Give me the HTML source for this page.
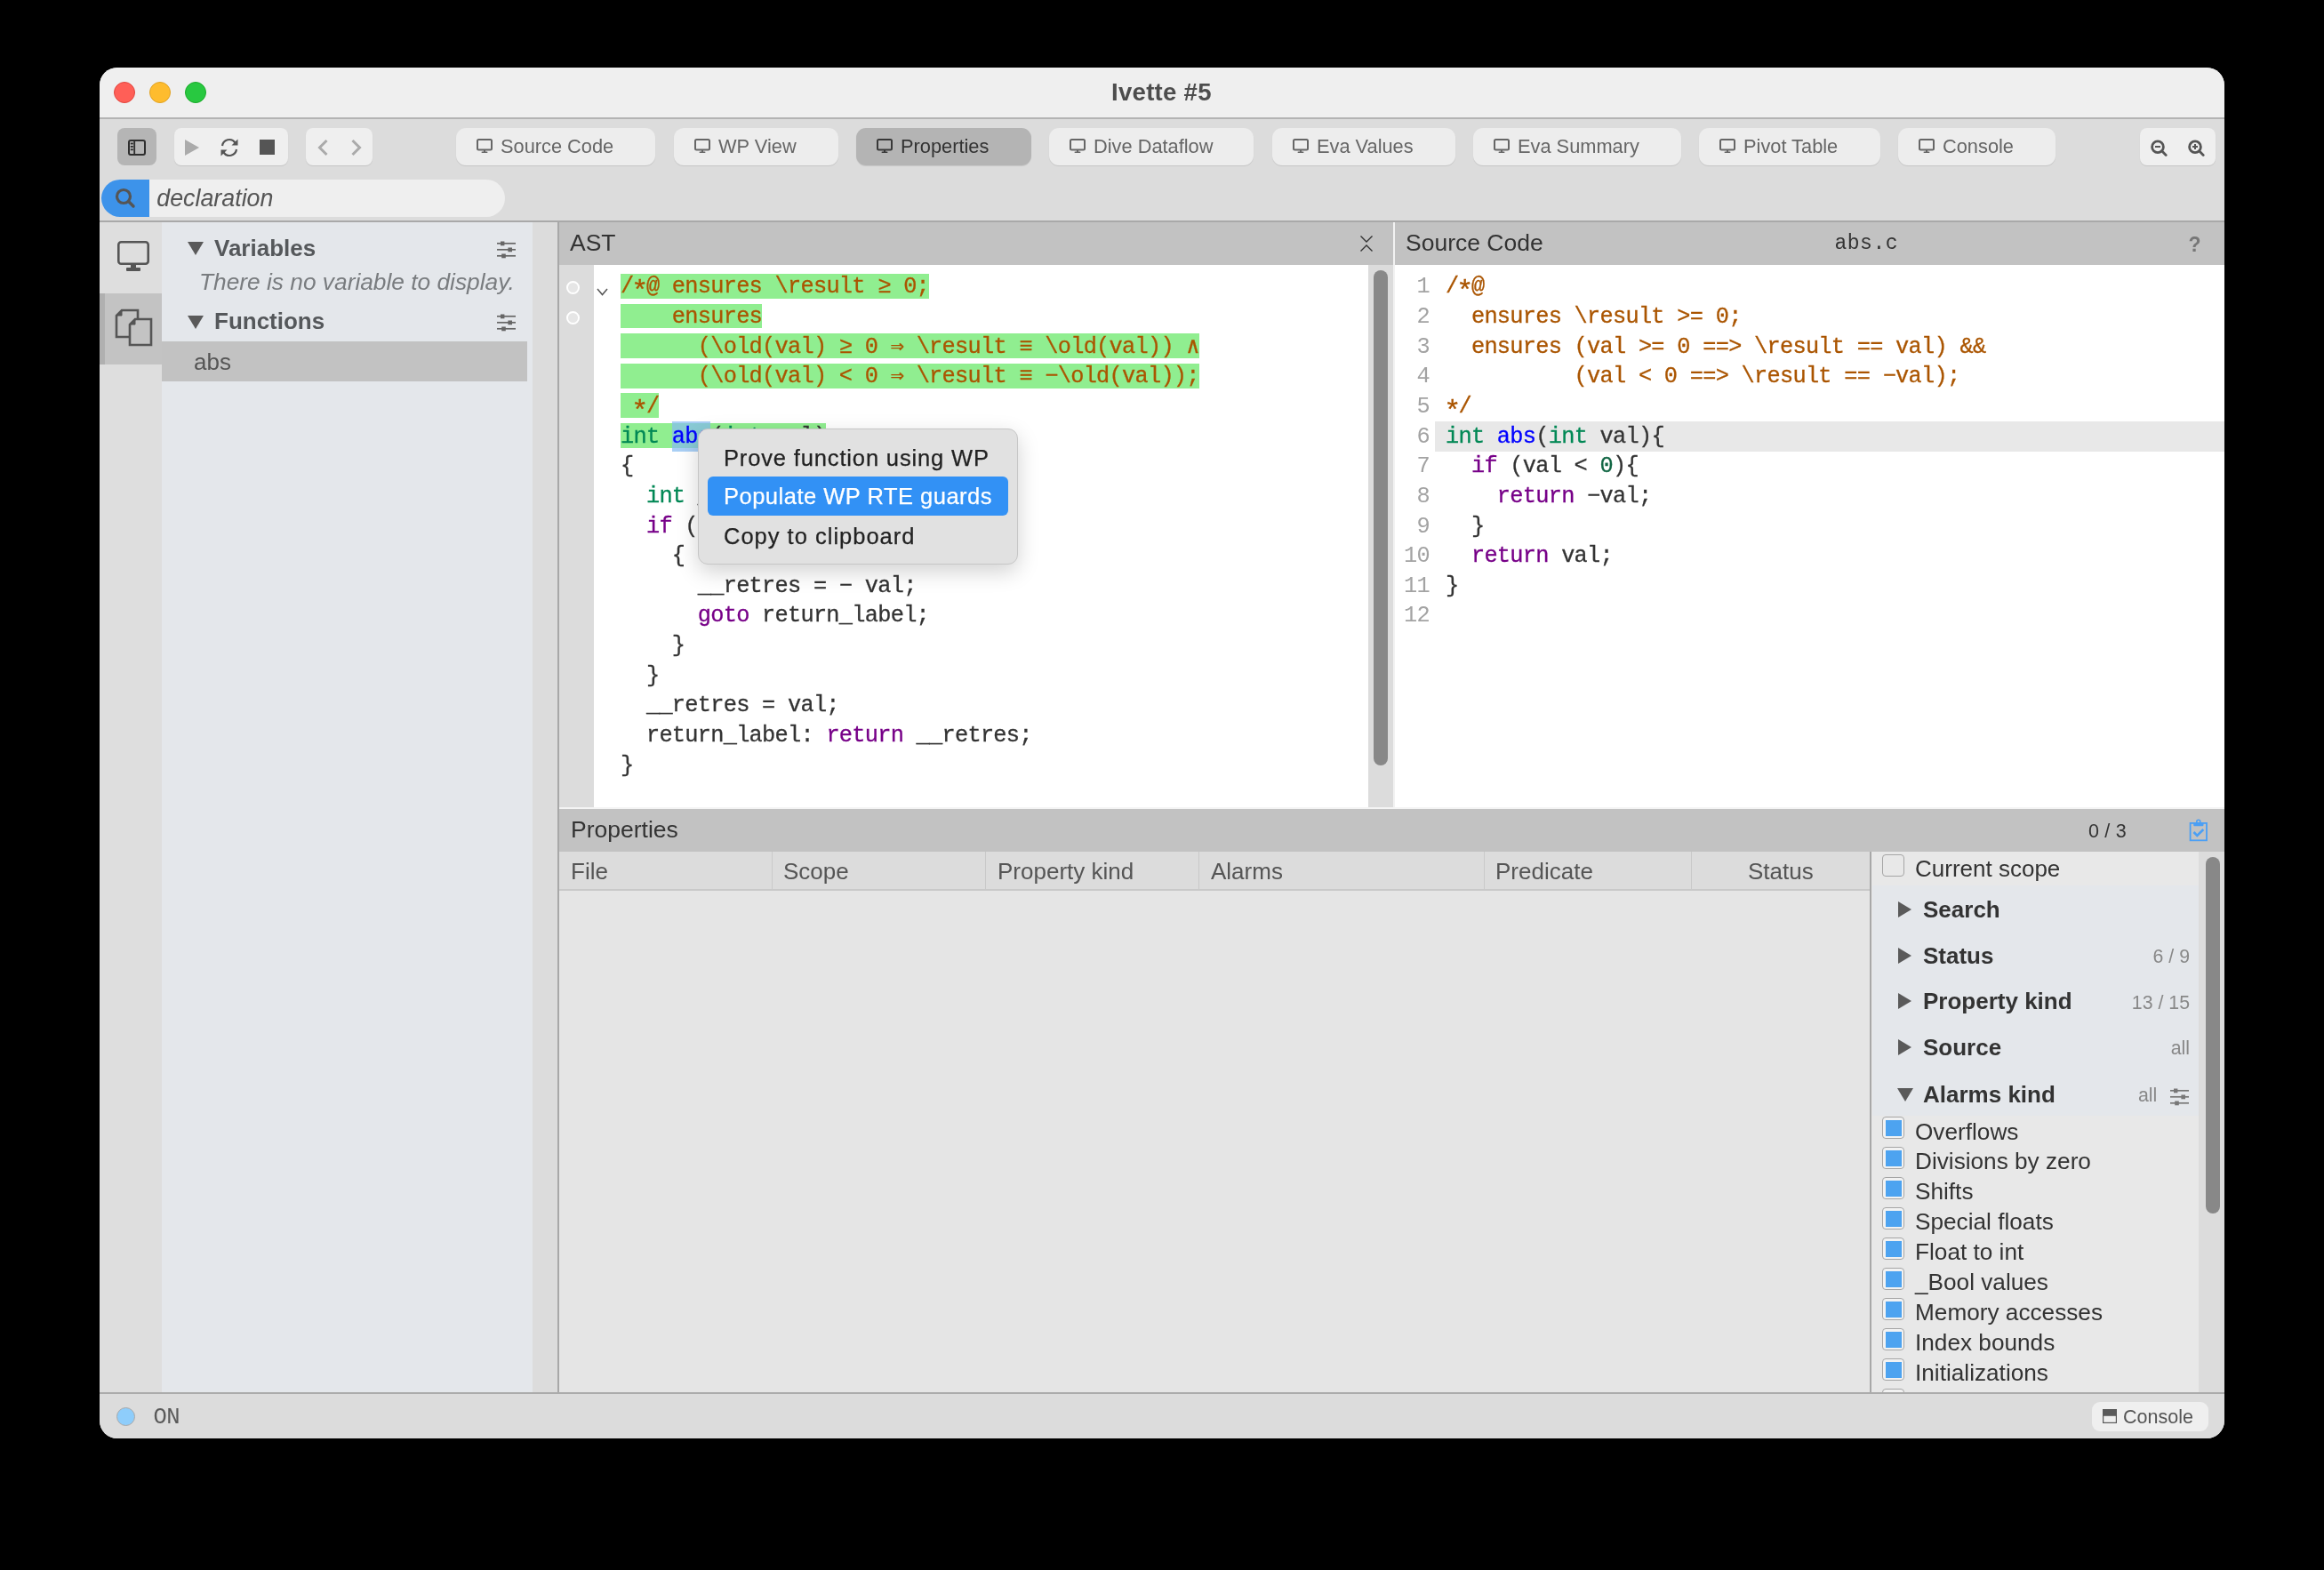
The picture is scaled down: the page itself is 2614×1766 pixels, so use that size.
<!DOCTYPE html>
<html><head><meta charset="utf-8"><title>Ivette</title>
<style>
html,body{margin:0;padding:0;width:2614px;height:1766px;background:#000;overflow:hidden}
.a{position:absolute;box-sizing:border-box}
.t{white-space:pre}
#win{position:absolute;left:112px;top:76px;width:2390px;height:1542px;border-radius:20px;overflow:hidden;background:#dcdcdc}
#inner{position:absolute;left:-112px;top:-76px;width:2614px;height:1766px;will-change:transform}
</style></head><body>
<div id="win"><div id="inner">

<div class="a" style="left:112px;top:76px;width:2390px;height:56px;background:#efefef;"></div>
<div class="a" style="left:112px;top:132px;width:2390px;height:1.5px;background:#b3b3b3;"></div>
<div class="a" style="left:128px;top:92px;width:24px;height:24px;border-radius:50%;background:#ff5f57;border:1px solid #e2463f"></div>
<div class="a" style="left:168px;top:92px;width:24px;height:24px;border-radius:50%;background:#febc2e;border:1px solid #e1a325"></div>
<div class="a" style="left:208px;top:92px;width:24px;height:24px;border-radius:50%;background:#28c840;border:1px solid #1aab29"></div>
<div class="a t" style="left:1250px;top:86.97px;font-family:'Liberation Sans', sans-serif;font-size:27.5px;line-height:33.0px;color:#4d4d4d;font-weight:bold;font-style:normal;letter-spacing:0.3px;">Ivette #5</div>
<div class="a" style="left:112px;top:134px;width:2390px;height:114px;background:#dcdcdc;"></div>
<div class="a" style="left:112px;top:248px;width:2390px;height:2px;background:#a9a9a9;"></div>
<div class="a" style="left:132px;top:144px;width:44px;height:42px;border-radius:8px;background:#b5b5b5"></div>
<svg class="a" style="left:144px;top:157px;" width="20" height="18" viewBox="0 0 20 18"><rect x="1" y="1" width="18" height="16" rx="2" fill="none" stroke="#2e2e2e" stroke-width="2"/><line x1="7.2" y1="1" x2="7.2" y2="17" stroke="#2e2e2e" stroke-width="1.8"/><rect x="2.8" y="3.6" width="3" height="1.8" fill="#2e2e2e"/><rect x="2.8" y="7" width="3" height="1.8" fill="#2e2e2e"/><rect x="2.8" y="10.4" width="3" height="1.8" fill="#2e2e2e"/></svg>
<div class="a" style="left:196px;top:144px;width:128px;height:42px;border-radius:8px;background:#efefef;box-shadow:0 1px 1px rgba(0,0,0,0.10)"></div>
<svg class="a" style="left:207px;top:157px;" width="17" height="18" viewBox="0 0 17 18"><path d="M1 0 L17 9 L1 18 Z" fill="#ababab"/></svg>
<svg class="a" style="left:246px;top:155px;" width="24" height="22" viewBox="0 0 24 22"><path d="M4 9 A8 8 0 0 1 18.5 5.5" fill="none" stroke="#555" stroke-width="2.2"/><path d="M20 13 A8 8 0 0 1 5.5 16.5" fill="none" stroke="#555" stroke-width="2.2"/><path d="M21.5 1.5 L21.5 8.5 L14.5 8.5 Z" fill="#555"/><path d="M2.5 20.5 L2.5 13.5 L9.5 13.5 Z" fill="#555"/></svg>
<div class="a" style="left:292px;top:157px;width:17px;height:17px;background:#555;"></div>
<div class="a" style="left:344px;top:144px;width:75px;height:42px;border-radius:8px;background:#efefef;box-shadow:0 1px 1px rgba(0,0,0,0.10)"></div>
<svg class="a" style="left:356px;top:156px;" width="14" height="20" viewBox="0 0 14 20"><path d="M11.5 2 L3.5 10 L11.5 18" fill="none" stroke="#aaa" stroke-width="3"/></svg>
<svg class="a" style="left:394px;top:156px;" width="14" height="20" viewBox="0 0 14 20"><path d="M2.5 2 L10.5 10 L2.5 18" fill="none" stroke="#aaa" stroke-width="3"/></svg>
<div class="a" style="left:513px;top:144px;width:224px;height:42px;border-radius:11px;background:#ededed;box-shadow:0 1px 1px rgba(0,0,0,0.10)"></div>
<svg class="a" style="left:536px;top:156px;" width="18" height="17" viewBox="0 0 18 17"><rect x="1" y="1" width="16" height="11.5" rx="1.5" fill="none" stroke="#666" stroke-width="2"/><rect x="8" y="12.5" width="2" height="2.5" fill="#666"/><rect x="5.5" y="14.5" width="7" height="1.6" rx="0.8" fill="#666"/></svg>
<div class="a t" style="left:563px;top:151.97px;font-family:'Liberation Sans', sans-serif;font-size:21.8px;line-height:26.16px;color:#666;font-weight:normal;font-style:normal;">Source Code</div>
<div class="a" style="left:758px;top:144px;width:185px;height:42px;border-radius:11px;background:#ededed;box-shadow:0 1px 1px rgba(0,0,0,0.10)"></div>
<svg class="a" style="left:781px;top:156px;" width="18" height="17" viewBox="0 0 18 17"><rect x="1" y="1" width="16" height="11.5" rx="1.5" fill="none" stroke="#666" stroke-width="2"/><rect x="8" y="12.5" width="2" height="2.5" fill="#666"/><rect x="5.5" y="14.5" width="7" height="1.6" rx="0.8" fill="#666"/></svg>
<div class="a t" style="left:808px;top:151.97px;font-family:'Liberation Sans', sans-serif;font-size:21.8px;line-height:26.16px;color:#666;font-weight:normal;font-style:normal;">WP View</div>
<div class="a" style="left:963px;top:144px;width:197px;height:42px;border-radius:11px;background:#b4b4b4;box-shadow:0 1px 1px rgba(0,0,0,0.10)"></div>
<svg class="a" style="left:986px;top:156px;" width="18" height="17" viewBox="0 0 18 17"><rect x="1" y="1" width="16" height="11.5" rx="1.5" fill="none" stroke="#383838" stroke-width="2"/><rect x="8" y="12.5" width="2" height="2.5" fill="#383838"/><rect x="5.5" y="14.5" width="7" height="1.6" rx="0.8" fill="#383838"/></svg>
<div class="a t" style="left:1013px;top:151.97px;font-family:'Liberation Sans', sans-serif;font-size:21.8px;line-height:26.16px;color:#333;font-weight:normal;font-style:normal;">Properties</div>
<div class="a" style="left:1180px;top:144px;width:230px;height:42px;border-radius:11px;background:#ededed;box-shadow:0 1px 1px rgba(0,0,0,0.10)"></div>
<svg class="a" style="left:1203px;top:156px;" width="18" height="17" viewBox="0 0 18 17"><rect x="1" y="1" width="16" height="11.5" rx="1.5" fill="none" stroke="#666" stroke-width="2"/><rect x="8" y="12.5" width="2" height="2.5" fill="#666"/><rect x="5.5" y="14.5" width="7" height="1.6" rx="0.8" fill="#666"/></svg>
<div class="a t" style="left:1230px;top:151.97px;font-family:'Liberation Sans', sans-serif;font-size:21.8px;line-height:26.16px;color:#666;font-weight:normal;font-style:normal;">Dive Dataflow</div>
<div class="a" style="left:1431px;top:144px;width:206px;height:42px;border-radius:11px;background:#ededed;box-shadow:0 1px 1px rgba(0,0,0,0.10)"></div>
<svg class="a" style="left:1454px;top:156px;" width="18" height="17" viewBox="0 0 18 17"><rect x="1" y="1" width="16" height="11.5" rx="1.5" fill="none" stroke="#666" stroke-width="2"/><rect x="8" y="12.5" width="2" height="2.5" fill="#666"/><rect x="5.5" y="14.5" width="7" height="1.6" rx="0.8" fill="#666"/></svg>
<div class="a t" style="left:1481px;top:151.97px;font-family:'Liberation Sans', sans-serif;font-size:21.8px;line-height:26.16px;color:#666;font-weight:normal;font-style:normal;">Eva Values</div>
<div class="a" style="left:1657px;top:144px;width:234px;height:42px;border-radius:11px;background:#ededed;box-shadow:0 1px 1px rgba(0,0,0,0.10)"></div>
<svg class="a" style="left:1680px;top:156px;" width="18" height="17" viewBox="0 0 18 17"><rect x="1" y="1" width="16" height="11.5" rx="1.5" fill="none" stroke="#666" stroke-width="2"/><rect x="8" y="12.5" width="2" height="2.5" fill="#666"/><rect x="5.5" y="14.5" width="7" height="1.6" rx="0.8" fill="#666"/></svg>
<div class="a t" style="left:1707px;top:151.97px;font-family:'Liberation Sans', sans-serif;font-size:21.8px;line-height:26.16px;color:#666;font-weight:normal;font-style:normal;">Eva Summary</div>
<div class="a" style="left:1911px;top:144px;width:204px;height:42px;border-radius:11px;background:#ededed;box-shadow:0 1px 1px rgba(0,0,0,0.10)"></div>
<svg class="a" style="left:1934px;top:156px;" width="18" height="17" viewBox="0 0 18 17"><rect x="1" y="1" width="16" height="11.5" rx="1.5" fill="none" stroke="#666" stroke-width="2"/><rect x="8" y="12.5" width="2" height="2.5" fill="#666"/><rect x="5.5" y="14.5" width="7" height="1.6" rx="0.8" fill="#666"/></svg>
<div class="a t" style="left:1961px;top:151.97px;font-family:'Liberation Sans', sans-serif;font-size:21.8px;line-height:26.16px;color:#666;font-weight:normal;font-style:normal;">Pivot Table</div>
<div class="a" style="left:2135px;top:144px;width:177px;height:42px;border-radius:11px;background:#ededed;box-shadow:0 1px 1px rgba(0,0,0,0.10)"></div>
<svg class="a" style="left:2158px;top:156px;" width="18" height="17" viewBox="0 0 18 17"><rect x="1" y="1" width="16" height="11.5" rx="1.5" fill="none" stroke="#666" stroke-width="2"/><rect x="8" y="12.5" width="2" height="2.5" fill="#666"/><rect x="5.5" y="14.5" width="7" height="1.6" rx="0.8" fill="#666"/></svg>
<div class="a t" style="left:2185px;top:151.97px;font-family:'Liberation Sans', sans-serif;font-size:21.8px;line-height:26.16px;color:#666;font-weight:normal;font-style:normal;">Console</div>
<div class="a" style="left:2407px;top:144px;width:85px;height:42px;border-radius:8px;background:#efefef;box-shadow:0 1px 1px rgba(0,0,0,0.10)"></div>
<svg class="a" style="left:2419px;top:157px;" width="19" height="19" viewBox="0 0 19 19"><circle cx="8" cy="8.2" r="6.4" fill="none" stroke="#555" stroke-width="2.8"/><line x1="12.6" y1="12.8" x2="17.2" y2="17.4" stroke="#555" stroke-width="2.8" stroke-linecap="round"/><line x1="5" y1="8" x2="11" y2="8" stroke="#555" stroke-width="2"/></svg>
<svg class="a" style="left:2461px;top:157px;" width="19" height="19" viewBox="0 0 19 19"><circle cx="8" cy="8.2" r="6.4" fill="none" stroke="#555" stroke-width="2.8"/><line x1="12.6" y1="12.8" x2="17.2" y2="17.4" stroke="#555" stroke-width="2.8" stroke-linecap="round"/><line x1="5" y1="8" x2="11" y2="8" stroke="#555" stroke-width="2"/><line x1="8" y1="5" x2="8" y2="11" stroke="#555" stroke-width="2"/></svg>
<div class="a" style="left:114px;top:202px;width:454px;height:42px;border-radius:21px;background:#efefef"></div>
<div class="a" style="left:114px;top:202px;width:54px;height:42px;border-radius:21px 0 0 21px;background:#3d93ea"></div>
<svg class="a" style="left:128px;top:210px;" width="26" height="26" viewBox="0 0 26 26"><circle cx="11" cy="11" r="7.5" fill="none" stroke="#555" stroke-width="3.2"/><line x1="16.5" y1="16.5" x2="22" y2="22" stroke="#555" stroke-width="3.4" stroke-linecap="round"/></svg>
<div class="a t" style="left:176.3px;top:207.33px;font-family:'Liberation Sans', sans-serif;font-size:26.8px;line-height:32.16px;color:#555;font-weight:normal;font-style:italic;">declaration</div>
<div class="a" style="left:112px;top:250px;width:70px;height:1317px;background:#dedede;"></div>
<div class="a" style="left:112px;top:330px;width:70px;height:80px;background:#c3c3c3;"></div>
<div class="a" style="left:112px;top:330px;width:6px;height:80px;background:#b0b0b0;"></div>
<svg class="a" style="left:131px;top:270px;" width="38" height="36" viewBox="0 0 38 36"><rect x="2.3" y="2.3" width="33.4" height="24.4" rx="3" fill="none" stroke="#555" stroke-width="2.6"/><rect x="16" y="27" width="6" height="5" fill="#555"/><rect x="11" y="31" width="16" height="4" rx="1" fill="#555"/></svg>
<svg class="a" style="left:128px;top:346px;" width="44" height="44" viewBox="0 0 44 44"><path d="M9 3 H27 V33 H3 V9 Z" fill="#c3c3c3" stroke="#555" stroke-width="2.6"/><path d="M3 9 L9 9 L9 3" fill="#555" stroke="#555" stroke-width="1"/><path d="M24 13 H42 V42 H18 V19 Z" fill="#c3c3c3" stroke="#555" stroke-width="2.6"/><path d="M18 19 L24 19 L24 13" fill="#555" stroke="#555" stroke-width="1"/></svg>
<div class="a" style="left:182px;top:250px;width:417px;height:1317px;background:#e4e7eb;"></div>
<div class="a" style="left:599px;top:250px;width:28px;height:1317px;background:#dcdcdc;"></div>
<div class="a" style="left:627px;top:250px;width:2px;height:1317px;background:#a8a8a8;"></div>
<svg class="a" style="left:211px;top:272px;" width="18" height="15" viewBox="0 0 18 15"><path d="M0 0 H18 L9 15 Z" fill="#5a5a5a"/></svg>
<div class="a t" style="left:241px;top:264.39px;font-family:'Liberation Sans', sans-serif;font-size:26px;line-height:31.2px;color:#55585b;font-weight:bold;font-style:normal;">Variables</div>
<svg class="a" style="left:559px;top:271px;" width="21" height="20" viewBox="0 0 21 20"><line x1="0" y1="2.8" x2="21" y2="2.8" stroke="#666" stroke-width="1.7"/><line x1="0" y1="9.8" x2="21" y2="9.8" stroke="#666" stroke-width="1.7"/><line x1="0" y1="16.8" x2="21" y2="16.8" stroke="#666" stroke-width="1.7"/><rect x="4" y="0.5" width="4.4" height="4.8" fill="#666"/><rect x="12.4" y="7.5" width="4.6" height="4.8" fill="#666"/><rect x="5.2" y="14.5" width="4.6" height="4.8" fill="#666"/></svg>
<div class="a t" style="left:224px;top:302.11px;font-family:'Liberation Sans', sans-serif;font-size:26.3px;line-height:31.56px;color:#797c7f;font-weight:normal;font-style:italic;">There is no variable to display.</div>
<svg class="a" style="left:211px;top:355px;" width="18" height="15" viewBox="0 0 18 15"><path d="M0 0 H18 L9 15 Z" fill="#5a5a5a"/></svg>
<div class="a t" style="left:241px;top:346.39px;font-family:'Liberation Sans', sans-serif;font-size:26px;line-height:31.2px;color:#55585b;font-weight:bold;font-style:normal;">Functions</div>
<svg class="a" style="left:559px;top:353px;" width="21" height="20" viewBox="0 0 21 20"><line x1="0" y1="2.8" x2="21" y2="2.8" stroke="#666" stroke-width="1.7"/><line x1="0" y1="9.8" x2="21" y2="9.8" stroke="#666" stroke-width="1.7"/><line x1="0" y1="16.8" x2="21" y2="16.8" stroke="#666" stroke-width="1.7"/><rect x="4" y="0.5" width="4.4" height="4.8" fill="#666"/><rect x="12.4" y="7.5" width="4.6" height="4.8" fill="#666"/><rect x="5.2" y="14.5" width="4.6" height="4.8" fill="#666"/></svg>
<div class="a" style="left:182px;top:384px;width:411px;height:45px;background:#c2c2c2;"></div>
<div class="a t" style="left:218px;top:391.99px;font-family:'Liberation Sans', sans-serif;font-size:26px;line-height:31.2px;color:#555;font-weight:normal;font-style:normal;">abs</div>
<div class="a" style="left:629px;top:250px;width:938px;height:48px;background:#c2c2c2;"></div>
<div class="a t" style="left:641px;top:257.92px;font-family:'Liberation Sans', sans-serif;font-size:26.5px;line-height:31.8px;color:#333;font-weight:normal;font-style:normal;">AST</div>
<svg class="a" style="left:1529px;top:264px;" width="16" height="20" viewBox="0 0 16 20"><path d="M1.5 1.5 L8 8 L14.5 1.5" fill="none" stroke="#333" stroke-width="1.4"/><path d="M1.5 18.5 L8 12 L14.5 18.5" fill="none" stroke="#333" stroke-width="1.4"/></svg>
<div class="a" style="left:629px;top:298px;width:39px;height:610px;background:#dcdcdc;"></div>
<div class="a" style="left:668px;top:298px;width:871px;height:610px;background:#ffffff;"></div>
<div class="a" style="left:1539px;top:298px;width:28px;height:610px;background:#dcdcdc;"></div>
<div class="a" style="left:1545px;top:304px;width:16px;height:557px;border-radius:8px;background:#888"></div>
<div class="a" style="left:629px;top:908px;width:1873px;height:2px;background:#f4f4f4;"></div>
<div class="a" style="left:1567px;top:250px;width:2px;height:658px;background:#f2f2f2;"></div>
<div class="a" style="left:636.5px;top:316.1px;width:15px;height:15px;border-radius:50%;border:2px solid #fff;background:#e6e6e6"></div>
<div class="a" style="left:636.5px;top:350.1px;width:15px;height:15px;border-radius:50%;border:2px solid #fff;background:#e6e6e6"></div>
<svg class="a" style="left:671px;top:324px;" width="13" height="9" viewBox="0 0 13 9"><path d="M1 1 L6.5 7.5 L12 1" fill="none" stroke="#555" stroke-width="1.5"/></svg>
<div class="a" style="left:698px;top:307.90px;width:347.04px;height:27.8px;background:#90ee90"></div>
<div class="a" style="left:698px;top:341.54px;width:159.06px;height:27.8px;background:#90ee90"></div>
<div class="a" style="left:698px;top:375.17px;width:650.70px;height:27.8px;background:#90ee90"></div>
<div class="a" style="left:698px;top:408.81px;width:650.70px;height:27.8px;background:#90ee90"></div>
<div class="a" style="left:698px;top:442.44px;width:43.38px;height:27.8px;background:#90ee90"></div>
<div class="a" style="left:698px;top:476.08px;width:231.36px;height:27.8px;background:#90ee90"></div>
<div class="a" style="left:755.84px;top:473.7px;width:43.38px;height:34px;background:rgba(134,187,241,0.71)"></div>
<div class="a t" style="left:698px;top:306.4px;font-family:'Liberation Mono', monospace;font-size:25.3px;letter-spacing:-0.72px;line-height:33.636px;color:#333;-webkit-text-stroke:0.3px;"><span style="color:#a50;">/<span style="display:inline-block;transform:translateY(6px) scale(1.25)">*</span>@ ensures \result ≥ 0;</span>
<span style="color:#a50;">    ensures</span>
<span style="color:#a50;">      (\old(val) ≥ 0 ⇒ \result ≡ \old(val)) ∧</span>
<span style="color:#a50;">      (\old(val) &lt; 0 ⇒ \result ≡ −\old(val));</span>
<span style="color:#a50;"> <span style="display:inline-block;transform:translateY(6px) scale(1.25)">*</span>/</span>
<span style="color:#085;">int</span> <span style="color:#00f;">abs</span>(<span style="color:#085;">int</span> val)
{
  <span style="color:#085;">int</span> __retres;
  <span style="color:#708;">if</span> (val &lt; <span style="color:#164;">0</span>) {
    {
      __retres = − val;
      <span style="color:#708;">goto</span> return_label;
    }
  }
  __retres = val;
  return_label: <span style="color:#708;">return</span> __retres;
}</div>
<div class="a" style="left:1569px;top:250px;width:933px;height:48px;background:#c2c2c2;"></div>
<div class="a t" style="left:1581px;top:257.92px;font-family:'Liberation Sans', sans-serif;font-size:26.5px;line-height:31.8px;color:#333;font-weight:normal;font-style:normal;">Source Code</div>
<div class="a t" style="left:2063.5px;top:261.07px;font-family:'Liberation Mono', monospace;font-size:23px;line-height:27.6px;color:#333;font-weight:normal;font-style:normal;letter-spacing:0.5px;">abs.c</div>
<div class="a t" style="left:2461.5px;top:261.83px;font-family:'Liberation Sans', sans-serif;font-size:23px;line-height:27.6px;color:#777;font-weight:bold;font-style:normal;">?</div>
<div class="a" style="left:1569px;top:298px;width:933px;height:610px;background:#ffffff;"></div>
<div class="a" style="left:1614px;top:474px;width:888px;height:34px;background:#e8e8e8;"></div>
<div class="a t" style="left:1626px;top:306.4px;font-family:'Liberation Mono', monospace;font-size:25.3px;letter-spacing:-0.72px;line-height:33.636px;color:#333;-webkit-text-stroke:0.3px;"><span style="color:#a50;">/<span style="display:inline-block;transform:translateY(6px) scale(1.25)">*</span>@</span>
<span style="color:#a50;">  ensures \result &gt;= 0;</span>
<span style="color:#a50;">  ensures (val &gt;= 0 ==&gt; \result == val) &amp;&amp;</span>
<span style="color:#a50;">          (val &lt; 0 ==&gt; \result == −val);</span>
<span style="color:#a50;"><span style="display:inline-block;transform:translateY(6px) scale(1.25)">*</span>/</span>
<span style="color:#085;">int</span> <span style="color:#00f;">abs</span>(<span style="color:#085;">int</span> val){
  <span style="color:#708;">if</span> (val &lt; <span style="color:#164;">0</span>){
    <span style="color:#708;">return</span> −val;
  }
  <span style="color:#708;">return</span> val;
}
</div>
<div class="a t" style="left:1560px;width:48px;text-align:right;top:306.4px;font-family:'Liberation Mono', monospace;font-size:25.3px;letter-spacing:-0.72px;line-height:33.636px;color:#a3a3a3">1
2
3
4
5
6
7
8
9
10
11
12</div>
<div class="a" style="left:629px;top:910px;width:1873px;height:48px;background:#c2c2c2;"></div>
<div class="a t" style="left:642px;top:917.92px;font-family:'Liberation Sans', sans-serif;font-size:26.5px;line-height:31.8px;color:#333;font-weight:normal;font-style:normal;">Properties</div>
<div class="a t" style="left:2349px;top:922.65px;font-family:'Liberation Sans', sans-serif;font-size:21.5px;line-height:25.8px;color:#333;font-weight:normal;font-style:normal;letter-spacing:0.2px;">0 / 3</div>
<svg class="a" style="left:2461px;top:921px;" width="24" height="26" viewBox="0 0 24 26"><rect x="2.6" y="4.9" width="18.4" height="19.4" fill="none" stroke="#4a9ff5" stroke-width="1.8"/><path d="M6.2 5 H17.5 V7 Q17.5 8.2 16.3 8.2 H7.4 Q6.2 8.2 6.2 7 Z" fill="#4a9ff5"/><circle cx="11.8" cy="3.3" r="2" fill="none" stroke="#4a9ff5" stroke-width="1.6"/><path d="M6.5 15 L10.3 19 L17.3 12" fill="none" stroke="#4a9ff5" stroke-width="2.6"/></svg>
<div class="a" style="left:629px;top:958px;width:1474px;height:42px;background:#dcdcdc;"></div>
<div class="a" style="left:629px;top:1000px;width:1474px;height:2px;background:#c9c9c9;"></div>
<div class="a" style="left:629px;top:1002px;width:1474px;height:565px;background:#e5e5e5;"></div>
<div class="a" style="left:868px;top:958px;width:1px;height:42px;background:#c9c9c9;"></div>
<div class="a" style="left:1108px;top:958px;width:1px;height:42px;background:#c9c9c9;"></div>
<div class="a" style="left:1348px;top:958px;width:1px;height:42px;background:#c9c9c9;"></div>
<div class="a" style="left:1669px;top:958px;width:1px;height:42px;background:#c9c9c9;"></div>
<div class="a" style="left:1902px;top:958px;width:1px;height:42px;background:#c9c9c9;"></div>
<div class="a t" style="left:642px;top:965.39px;font-family:'Liberation Sans', sans-serif;font-size:26px;line-height:31.2px;color:#555;font-weight:normal;font-style:normal;">File</div>
<div class="a t" style="left:881px;top:965.39px;font-family:'Liberation Sans', sans-serif;font-size:26px;line-height:31.2px;color:#555;font-weight:normal;font-style:normal;">Scope</div>
<div class="a t" style="left:1122px;top:965.39px;font-family:'Liberation Sans', sans-serif;font-size:26px;line-height:31.2px;color:#555;font-weight:normal;font-style:normal;">Property kind</div>
<div class="a t" style="left:1362px;top:965.39px;font-family:'Liberation Sans', sans-serif;font-size:26px;line-height:31.2px;color:#555;font-weight:normal;font-style:normal;">Alarms</div>
<div class="a t" style="left:1682px;top:965.39px;font-family:'Liberation Sans', sans-serif;font-size:26px;line-height:31.2px;color:#555;font-weight:normal;font-style:normal;">Predicate</div>
<div class="a t" style="left:1966px;top:965.39px;font-family:'Liberation Sans', sans-serif;font-size:26px;line-height:31.2px;color:#555;font-weight:normal;font-style:normal;">Status</div>
<div class="a" style="left:2103px;top:958px;width:2px;height:609px;background:#a8a8a8;"></div>
<div class="a" style="left:2105px;top:958px;width:397px;height:609px;background:#e8e8e8;"></div>
<div class="a" style="left:2106px;top:996px;width:368px;height:259px;background:#e4e7eb;"></div>
<div class="a" style="left:2473px;top:958px;width:29px;height:609px;background:#dcdcdc;"></div>
<div class="a" style="left:2481px;top:964px;width:16px;height:401px;border-radius:8px;background:#888"></div>
<div class="a" style="left:2117px;top:961px;width:25px;height:25px;border-radius:4px;border:1.5px solid #a5a5a5;background:transparent"></div>
<div class="a t" style="left:2154px;top:962.39px;font-family:'Liberation Sans', sans-serif;font-size:26px;line-height:31.2px;color:#333;font-weight:normal;font-style:normal;">Current scope</div>
<svg class="a" style="left:2135px;top:1014px;" width="15" height="18" viewBox="0 0 15 18"><path d="M0 0 L15 9 L0 18 Z" fill="#5a5a5a"/></svg>
<div class="a t" style="left:2163px;top:1008.39px;font-family:'Liberation Sans', sans-serif;font-size:26px;line-height:31.2px;color:#333;font-weight:bold;font-style:normal;">Search</div>
<svg class="a" style="left:2135px;top:1065.5px;" width="15" height="18" viewBox="0 0 15 18"><path d="M0 0 L15 9 L0 18 Z" fill="#5a5a5a"/></svg>
<div class="a t" style="left:2163px;top:1059.89px;font-family:'Liberation Sans', sans-serif;font-size:26px;line-height:31.2px;color:#333;font-weight:bold;font-style:normal;">Status</div>
<div class="a t" style="left:2300px;width:163px;text-align:right;top:1064.34px;font-family:'Liberation Sans', sans-serif;font-size:21.3px;line-height:25.56px;color:#888">6 / 9</div>
<svg class="a" style="left:2135px;top:1117px;" width="15" height="18" viewBox="0 0 15 18"><path d="M0 0 L15 9 L0 18 Z" fill="#5a5a5a"/></svg>
<div class="a t" style="left:2163px;top:1111.39px;font-family:'Liberation Sans', sans-serif;font-size:26px;line-height:31.2px;color:#333;font-weight:bold;font-style:normal;">Property kind</div>
<div class="a t" style="left:2300px;width:163px;text-align:right;top:1115.84px;font-family:'Liberation Sans', sans-serif;font-size:21.3px;line-height:25.56px;color:#888">13 / 15</div>
<svg class="a" style="left:2135px;top:1168.6px;" width="15" height="18" viewBox="0 0 15 18"><path d="M0 0 L15 9 L0 18 Z" fill="#5a5a5a"/></svg>
<div class="a t" style="left:2163px;top:1162.99px;font-family:'Liberation Sans', sans-serif;font-size:26px;line-height:31.2px;color:#333;font-weight:bold;font-style:normal;">Source</div>
<div class="a t" style="left:2300px;width:163px;text-align:right;top:1167.44px;font-family:'Liberation Sans', sans-serif;font-size:21.3px;line-height:25.56px;color:#888">all</div>
<svg class="a" style="left:2134px;top:1224px;" width="18" height="15" viewBox="0 0 18 15"><path d="M0 0 H18 L9 15 Z" fill="#5a5a5a"/></svg>
<div class="a t" style="left:2163px;top:1215.99px;font-family:'Liberation Sans', sans-serif;font-size:26px;line-height:31.2px;color:#333;font-weight:bold;font-style:normal;">Alarms kind</div>
<div class="a t" style="left:2405px;top:1220.44px;font-family:'Liberation Sans', sans-serif;font-size:21.3px;line-height:25.56px;color:#888;font-weight:normal;font-style:normal;">all</div>
<svg class="a" style="left:2441px;top:1224px;" width="21" height="20" viewBox="0 0 21 20"><line x1="0" y1="2.8" x2="21" y2="2.8" stroke="#777" stroke-width="1.7"/><line x1="0" y1="9.8" x2="21" y2="9.8" stroke="#777" stroke-width="1.7"/><line x1="0" y1="16.8" x2="21" y2="16.8" stroke="#777" stroke-width="1.7"/><rect x="4" y="0.5" width="4.4" height="4.8" fill="#777"/><rect x="12.4" y="7.5" width="4.6" height="4.8" fill="#777"/><rect x="5.2" y="14.5" width="4.6" height="4.8" fill="#777"/></svg>
<div class="a" style="left:2117px;top:1256.4px;width:25px;height:25px;border-radius:4px;border:1.5px solid #a5a5a5;background:#f2f2f2"></div>
<div class="a" style="left:2120.5px;top:1259.9px;width:18px;height:18px;background:#4da3f0"></div>
<div class="a t" style="left:2154px;top:1257.50px;font-family:'Liberation Sans', sans-serif;font-size:26.2px;line-height:31.44px;color:#333;font-weight:normal;font-style:normal;">Overflows</div>
<div class="a" style="left:2117px;top:1290.36px;width:25px;height:25px;border-radius:4px;border:1.5px solid #a5a5a5;background:#f2f2f2"></div>
<div class="a" style="left:2120.5px;top:1293.86px;width:18px;height:18px;background:#4da3f0"></div>
<div class="a t" style="left:2154px;top:1291.46px;font-family:'Liberation Sans', sans-serif;font-size:26.2px;line-height:31.44px;color:#333;font-weight:normal;font-style:normal;">Divisions by zero</div>
<div class="a" style="left:2117px;top:1324.32px;width:25px;height:25px;border-radius:4px;border:1.5px solid #a5a5a5;background:#f2f2f2"></div>
<div class="a" style="left:2120.5px;top:1327.82px;width:18px;height:18px;background:#4da3f0"></div>
<div class="a t" style="left:2154px;top:1325.42px;font-family:'Liberation Sans', sans-serif;font-size:26.2px;line-height:31.44px;color:#333;font-weight:normal;font-style:normal;">Shifts</div>
<div class="a" style="left:2117px;top:1358.28px;width:25px;height:25px;border-radius:4px;border:1.5px solid #a5a5a5;background:#f2f2f2"></div>
<div class="a" style="left:2120.5px;top:1361.78px;width:18px;height:18px;background:#4da3f0"></div>
<div class="a t" style="left:2154px;top:1359.38px;font-family:'Liberation Sans', sans-serif;font-size:26.2px;line-height:31.44px;color:#333;font-weight:normal;font-style:normal;">Special floats</div>
<div class="a" style="left:2117px;top:1392.24px;width:25px;height:25px;border-radius:4px;border:1.5px solid #a5a5a5;background:#f2f2f2"></div>
<div class="a" style="left:2120.5px;top:1395.74px;width:18px;height:18px;background:#4da3f0"></div>
<div class="a t" style="left:2154px;top:1393.34px;font-family:'Liberation Sans', sans-serif;font-size:26.2px;line-height:31.44px;color:#333;font-weight:normal;font-style:normal;">Float to int</div>
<div class="a" style="left:2117px;top:1426.2px;width:25px;height:25px;border-radius:4px;border:1.5px solid #a5a5a5;background:#f2f2f2"></div>
<div class="a" style="left:2120.5px;top:1429.7px;width:18px;height:18px;background:#4da3f0"></div>
<div class="a t" style="left:2154px;top:1427.30px;font-family:'Liberation Sans', sans-serif;font-size:26.2px;line-height:31.44px;color:#333;font-weight:normal;font-style:normal;">_Bool values</div>
<div class="a" style="left:2117px;top:1460.16px;width:25px;height:25px;border-radius:4px;border:1.5px solid #a5a5a5;background:#f2f2f2"></div>
<div class="a" style="left:2120.5px;top:1463.66px;width:18px;height:18px;background:#4da3f0"></div>
<div class="a t" style="left:2154px;top:1461.26px;font-family:'Liberation Sans', sans-serif;font-size:26.2px;line-height:31.44px;color:#333;font-weight:normal;font-style:normal;">Memory accesses</div>
<div class="a" style="left:2117px;top:1494.12px;width:25px;height:25px;border-radius:4px;border:1.5px solid #a5a5a5;background:#f2f2f2"></div>
<div class="a" style="left:2120.5px;top:1497.62px;width:18px;height:18px;background:#4da3f0"></div>
<div class="a t" style="left:2154px;top:1495.22px;font-family:'Liberation Sans', sans-serif;font-size:26.2px;line-height:31.44px;color:#333;font-weight:normal;font-style:normal;">Index bounds</div>
<div class="a" style="left:2117px;top:1528.08px;width:25px;height:25px;border-radius:4px;border:1.5px solid #a5a5a5;background:#f2f2f2"></div>
<div class="a" style="left:2120.5px;top:1531.58px;width:18px;height:18px;background:#4da3f0"></div>
<div class="a t" style="left:2154px;top:1529.18px;font-family:'Liberation Sans', sans-serif;font-size:26.2px;line-height:31.44px;color:#333;font-weight:normal;font-style:normal;">Initializations</div>
<div class="a" style="left:2117px;top:1562.04px;width:25px;height:25px;border-radius:4px;border:1.5px solid #a5a5a5;background:#f2f2f2"></div>
<div class="a" style="left:2120.5px;top:1565.54px;width:18px;height:18px;background:#4da3f0"></div>
<div class="a t" style="left:2154px;top:1563.14px;font-family:'Liberation Sans', sans-serif;font-size:26.2px;line-height:31.44px;color:#333;font-weight:normal;font-style:normal;">Pointer comparisons</div>
<div class="a" style="left:112px;top:1566px;width:2390px;height:2px;background:#ababab;"></div>
<div class="a" style="left:112px;top:1568px;width:2390px;height:50px;background:#dcdcdc;"></div>
<div class="a" style="left:130.5px;top:1582.5px;width:21px;height:21px;border-radius:50%;background:#8ecdfb;border:1.5px solid #a9a9a9"></div>
<div class="a t" style="left:172.5px;top:1579.90px;font-family:'Liberation Mono', monospace;font-size:25.5px;line-height:30.6px;color:#5a5a5a;font-weight:normal;font-style:normal;letter-spacing:-0.6px;">ON</div>
<div class="a" style="left:2353px;top:1577px;width:131px;height:33px;border-radius:9px;background:#efefef"></div>
<svg class="a" style="left:2365px;top:1585px;" width="16" height="16" viewBox="0 0 16 16"><rect x="0.6" y="0.6" width="14.8" height="14.8" fill="none" stroke="#5a5a5a" stroke-width="1.2"/><rect x="0" y="0" width="16" height="7.8" fill="#5a5a5a"/></svg>
<div class="a t" style="left:2388px;top:1582.15px;font-family:'Liberation Sans', sans-serif;font-size:21.5px;line-height:25.8px;color:#555;font-weight:normal;font-style:normal;">Console</div>
<div class="a" style="left:785px;top:481.5px;width:360px;height:153.5px;border-radius:11px;background:#e1e1e1;border:1px solid #c6c6c6;box-shadow:0 8px 24px rgba(0,0,0,0.18)"></div>
<div class="a" style="left:796px;top:536px;width:338px;height:44px;border-radius:6px;background:#3291f5"></div>
<div class="a t" style="left:814px;top:499.76px;font-family:'Liberation Sans', sans-serif;font-size:25.5px;line-height:30.6px;color:#222;font-weight:normal;font-style:normal;letter-spacing:0.85px;-webkit-text-stroke:0.25px;">Prove function using WP</div>
<div class="a t" style="left:814px;top:543.36px;font-family:'Liberation Sans', sans-serif;font-size:25.5px;line-height:30.6px;color:#fff;font-weight:normal;font-style:normal;letter-spacing:0.5px;-webkit-text-stroke:0.25px;">Populate WP RTE guards</div>
<div class="a t" style="left:814px;top:587.86px;font-family:'Liberation Sans', sans-serif;font-size:25.5px;line-height:30.6px;color:#222;font-weight:normal;font-style:normal;letter-spacing:1.0px;-webkit-text-stroke:0.25px;">Copy to clipboard</div>
</div></div>
</body></html>
